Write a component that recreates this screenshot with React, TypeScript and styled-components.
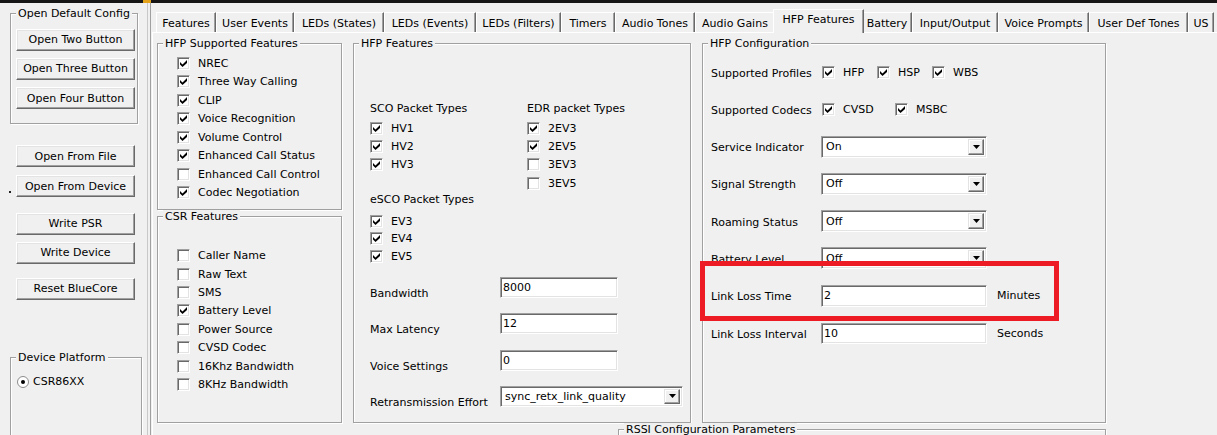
import styled, { createGlobalStyle, css } from "styled-components";

type TabDef = { label: string; width: number; active?: boolean };

const tabs: TabDef[] = [
  { label: "Features", width: 60 },
  { label: "User Events", width: 78 },
  { label: "LEDs (States)", width: 90 },
  { label: "LEDs (Events)", width: 92 },
  { label: "LEDs (Filters)", width: 85 },
  { label: "Timers", width: 54 },
  { label: "Audio Tones", width: 80 },
  { label: "Audio Gains", width: 80 },
  { label: "HFP Features", width: 87, active: true },
  { label: "Battery", width: 50 },
  { label: "Input/Output", width: 86 },
  { label: "Voice Prompts", width: 91 },
  { label: "User Def Tones", width: 99 },
  { label: "US", width: 26 },
];

const hfpSupported: [string, boolean][] = [
  ["NREC", true],
  ["Three Way Calling", true],
  ["CLIP", true],
  ["Voice Recognition", true],
  ["Volume Control", true],
  ["Enhanced Call Status", true],
  ["Enhanced Call Control", false],
  ["Codec Negotiation", true],
];

const csrFeatures: [string, boolean][] = [
  ["Caller Name", false],
  ["Raw Text", false],
  ["SMS", false],
  ["Battery Level", true],
  ["Power Source", false],
  ["CVSD Codec", false],
  ["16Khz Bandwidth", false],
  ["8KHz Bandwidth", false],
];

const GlobalStyle = createGlobalStyle`
  html, body {
    margin: 0;
    padding: 0;
    background: #f0f0f0;
  }
  body {
    font-family: "DejaVu Sans", "Liberation Sans", sans-serif;
    font-size: 11px;
    line-height: 13px;
    color: #000;
  }
  * {
    box-sizing: border-box;
  }
`;

const Window = styled.div`
  width: 1217px;
  height: 435px;
  overflow: hidden;
  display: flex;
  flex-direction: column;
  background: #f0f0f0;
`;

const TopStrip = styled.div`
  height: 3px;
  flex: none;
  display: flex;
  background: #161616;
`;

const StripMark = styled.span`
  margin-left: 143px;
  width: 8px;
  background: #e3a21a;
`;

const Body = styled.div`
  flex: 1;
  display: flex;
  min-height: 0;
`;

const Sidebar = styled.div`
  width: 147px;
  flex: none;
  display: flex;
  flex-direction: column;
  padding-left: 10px;
  overflow: hidden;
`;

const Splitter = styled.div`
  width: 4px;
  flex: none;
  border-left: 1px solid #c8c8c8;
  border-right: 1px solid #a0a0a0;
`;

const Group = styled.fieldset`
  margin: 0;
  padding: 0;
  min-width: 0;
  border: 1px solid #a0a0a0;
  box-shadow: inset 1px 1px 0 #fff, 1px 1px 0 #fff;
`;

const Legend = styled.legend`
  margin-left: 5px;
  padding: 0 2px;
  line-height: 13px;
  background: #f0f0f0;
  white-space: nowrap;
`;

const GroupBody = styled.div<{ $pad: string }>`
  padding: ${(p) => p.$pad};
  display: flex;
  flex-direction: column;
`;

const DefaultConfigGroup = styled(Group)`
  width: 128px;
  height: 117.5px;
  margin-top: 3.5px;
  flex: none;
`;

const PlatformGroup = styled(Group)`
  width: 132px;
  height: 110px;
  margin-top: 51.5px;
  flex: none;
`;

const Button = styled.button<{ $mt?: number; $ml?: number; $mark?: boolean }>`
  position: relative;
  display: block;
  flex: none;
  width: 119px;
  height: 22px;
  margin: ${(p) => p.$mt ?? 0}px 0 0 ${(p) => p.$ml ?? 6}px;
  padding: 0;
  font: inherit;
  color: #000;
  background: #f0f0f0;
  border: 1px solid;
  border-color: #fff #696969 #696969 #fff;
  box-shadow: inset -1px -1px 0 #a0a0a0, inset 1px 1px 0 #e3e3e3;
  ${(p) =>
    p.$mark &&
    css`
      &::before {
        content: "";
        position: absolute;
        left: -8px;
        top: 15px;
        width: 2px;
        height: 2px;
        background: #222;
      }
    `}
`;

const RadioRow = styled.div`
  display: flex;
  align-items: center;
  gap: 4px;
  height: 13px;
`;

const TabArea = styled.div`
  flex: 1;
  min-width: 0;
  display: flex;
  flex-direction: column;
  overflow: hidden;
`;

const TabStrip = styled.div`
  height: 29px;
  flex: none;
  display: flex;
  align-items: flex-end;
  padding-left: 5px;
`;

const Tab = styled.div<{ $w: number; $active?: boolean }>`
  flex: none;
  width: ${(p) => p.$w}px;
  height: 20px;
  display: flex;
  align-items: center;
  justify-content: center;
  padding-top: 1px;
  white-space: nowrap;
  background: #f0f0f0;
  border-top: 1px solid #fff;
  border-left: 1px solid #fff;
  border-right: 1px solid #696969;
  box-shadow: inset -1px 0 0 #a0a0a0;
  ${(p) =>
    p.$active &&
    css`
      position: relative;
      z-index: 1;
      width: ${p.$w + 4}px;
      height: 24px;
      margin: 0 -2px -1px;
      padding: 0 0 4px;
    `}
`;

const TabPanel = styled.div`
  flex: 1;
  min-height: 0;
  margin-left: 1px;
  border-top: 1px solid #fff;
  border-left: 1px solid #fff;
  padding: 3.5px 0 0 4px;
  display: flex;
  flex-direction: column;
`;

const Columns = styled.div`
  height: 386px;
  flex: none;
  display: flex;
  gap: 11px;
`;

const Column = styled.div<{ $w: number }>`
  width: ${(p) => p.$w}px;
  flex: none;
  display: flex;
  flex-direction: column;
`;

const FixedGroup = styled(Group)<{ $h: number }>`
  height: ${(p) => p.$h}px;
  flex: none;
`;

const FillGroup = styled(Group)`
  flex: 1;
`;

const RssiGroup = styled(Group)`
  width: 488px;
  height: 60px;
  margin-left: 461px;
  flex: none;
`;

const CheckRow = styled.div<{ $h?: number; $w?: number }>`
  display: flex;
  align-items: center;
  gap: 8px;
  height: ${(p) => p.$h ?? 18.5}px;
  white-space: nowrap;
  ${(p) =>
    p.$w &&
    css`
      width: ${p.$w}px;
      flex: none;
    `}
`;

const CheckFrame = styled.span`
  flex: none;
  width: 13px;
  height: 13px;
  display: flex;
  align-items: center;
  justify-content: center;
  background: #fff;
  border: 1px solid;
  border-color: #a0a0a0 #fff #fff #a0a0a0;
  box-shadow: inset 1px 1px 0 #696969, inset -1px -1px 0 #e3e3e3;
`;

const PacketGrid = styled.div`
  display: grid;
  grid-template-columns: 157px auto;
`;

const PacketColumn = styled.div`
  display: flex;
  flex-direction: column;
`;

const Caption = styled.div<{ $mt?: number; $mb?: number }>`
  height: 13px;
  line-height: 13px;
  white-space: nowrap;
  margin-top: ${(p) => p.$mt ?? 0}px;
  margin-bottom: ${(p) => p.$mb ?? 0}px;
`;

const FormList = styled.div`
  display: flex;
  flex-direction: column;
  gap: 15.3px;
  margin-top: 11.7px;
`;

const FormRow = styled.div`
  display: flex;
  height: 21px;
`;

const FormLabel = styled.span`
  width: 130px;
  flex: none;
  padding-top: 10px;
  white-space: nowrap;
`;

const sunken = css`
  background: #fff;
  border: 1px solid;
  border-color: #a0a0a0 #fff #fff #a0a0a0;
  box-shadow: inset 1px 1px 0 #696969, inset -1px -1px 0 #e3e3e3;
`;

const Field = styled.input<{ $w: number; $h: number }>`
  ${sunken};
  width: ${(p) => p.$w}px;
  height: ${(p) => p.$h}px;
  flex: none;
  margin: 0;
  padding: 0 2px;
  font: inherit;
  color: #000;
  outline: none;
`;

const SelectBox = styled.div<{ $w: number; $h: number }>`
  ${sunken};
  width: ${(p) => p.$w}px;
  height: ${(p) => p.$h}px;
  flex: none;
  display: flex;
  align-items: center;
  padding: 2px 2px 2px 4px;
`;

const SelectValue = styled.span`
  flex: 1;
  white-space: nowrap;
  overflow: hidden;
`;

const DropButton = styled.span`
  width: 16px;
  height: 100%;
  flex: none;
  display: flex;
  align-items: center;
  justify-content: center;
  background: #f0f0f0;
  border: 1px solid;
  border-color: #e3e3e3 #696969 #696969 #e3e3e3;
  box-shadow: inset -1px -1px 0 #a0a0a0, inset 1px 1px 0 #fff;
`;

const ConfigList = styled.div`
  display: flex;
  flex-direction: column;
  gap: 15.3px;
`;

const ConfigRow = styled.div`
  position: relative;
  display: flex;
  align-items: center;
  height: 22px;
`;

const ConfigLabel = styled.span`
  width: 110px;
  flex: none;
  padding-top: 2px;
  white-space: nowrap;
`;

const CheckGroup = styled.div`
  display: flex;
  align-items: center;
  margin-left: 1px;
`;

const Unit = styled.span`
  margin-left: 10px;
  white-space: nowrap;
`;

const Highlight = styled.div`
  position: absolute;
  left: -11px;
  top: -24px;
  width: 359px;
  height: 60px;
  border: 5px solid #ed1c24;
  z-index: 2;
  pointer-events: none;
`;

function Check({ on }: { on?: boolean }) {
  return (
    <CheckFrame>
      {on && (
        <svg width="7" height="7" viewBox="0 0 7 7">
          <polygon points="0,2 2.5,4.5 7,0 7,3 2.5,7 0,4.5" fill="#000" />
        </svg>
      )}
    </CheckFrame>
  );
}

function CheckItem({ label, on, h, w }: { label: string; on?: boolean; h?: number; w?: number }) {
  return (
    <CheckRow $h={h} $w={w}>
      <Check on={on} />
      <span>{label}</span>
    </CheckRow>
  );
}

function Dropdown({ value, w, h }: { value: string; w: number; h: number }) {
  return (
    <SelectBox $w={w} $h={h}>
      <SelectValue>{value}</SelectValue>
      <DropButton>
        <svg width="7" height="4" viewBox="0 0 7 4">
          <polygon points="0,0 7,0 3.5,4" fill="#000" />
        </svg>
      </DropButton>
    </SelectBox>
  );
}

function Radio() {
  return (
    <svg width="12" height="12" viewBox="0 0 12 12">
      <circle cx="6" cy="6" r="5.5" fill="#fff" stroke="#8c8c8c" />
      <circle cx="6" cy="6" r="2" fill="#000" />
    </svg>
  );
}

function Sidebar_() {
  return (
    <Sidebar>
      <DefaultConfigGroup>
        <Legend>Open Default Config</Legend>
        <GroupBody $pad="9px 0 0 0">
          <Button $ml={5}>Open Two Button</Button>
          <Button $ml={5} $mt={7.3}>Open Three Button</Button>
          <Button $ml={5} $mt={7.3}>Open Four Button</Button>
        </GroupBody>
      </DefaultConfigGroup>
      <Button $mt={21}>Open From File</Button>
      <Button $mt={8} $mark>Open From Device</Button>
      <Button $mt={15.7}>Write PSR</Button>
      <Button $mt={7}>Write Device</Button>
      <Button $mt={14.3}>Reset BlueCore</Button>
      <PlatformGroup>
        <Legend>Device Platform</Legend>
        <GroupBody $pad="10.7px 0 0 6px">
          <RadioRow>
            <Radio />
            <span>CSR86XX</span>
          </RadioRow>
        </GroupBody>
      </PlatformGroup>
    </Sidebar>
  );
}

export default function App() {
  return (
    <>
      <GlobalStyle />
      <Window>
        <TopStrip>
          <StripMark />
        </TopStrip>
        <Body>
          <Sidebar_ />
          <Splitter />
          <TabArea>
            <TabStrip>
              {tabs.map((t) => (
                <Tab key={t.label} $w={t.width} $active={t.active}>
                  {t.label}
                </Tab>
              ))}
            </TabStrip>
            <TabPanel>
              <Columns>
                <Column $w={185}>
                  <FixedGroup $h={173.5}>
                    <Legend>HFP Supported Features</Legend>
                    <GroupBody $pad="4.25px 0 0 19px">
                      {hfpSupported.map(([label, on]) => (
                        <CheckItem key={label} label={label} on={on} />
                      ))}
                    </GroupBody>
                  </FixedGroup>
                  <FillGroup>
                    <Legend>CSR Features</Legend>
                    <GroupBody $pad="23.5px 0 0 19px">
                      {csrFeatures.map(([label, on]) => (
                        <CheckItem key={label} label={label} on={on} h={18.4} />
                      ))}
                    </GroupBody>
                  </FillGroup>
                </Column>

                <Column $w={338}>
                  <FillGroup>
                    <Legend>HFP Features</Legend>
                    <GroupBody $pad="52px 0 0 16px">
                      <PacketGrid>
                        <PacketColumn>
                          <Caption $mb={4.5}>SCO Packet Types</Caption>
                          <CheckItem label="HV1" on h={18.3} />
                          <CheckItem label="HV2" on h={18.3} />
                          <CheckItem label="HV3" on h={18.3} />
                          <Caption $mt={19.6} $mb={6}>eSCO Packet Types</Caption>
                          <CheckItem label="EV3" on h={17.6} />
                          <CheckItem label="EV4" on h={17.6} />
                          <CheckItem label="EV5" on h={17.6} />
                        </PacketColumn>
                        <PacketColumn>
                          <Caption $mb={4.5}>EDR packet Types</Caption>
                          <CheckItem label="2EV3" on h={18.3} />
                          <CheckItem label="2EV5" on h={18.3} />
                          <CheckItem label="3EV3" h={18.3} />
                          <CheckItem label="3EV5" h={18.3} />
                        </PacketColumn>
                      </PacketGrid>
                      <FormList>
                        <FormRow>
                          <FormLabel>Bandwidth</FormLabel>
                          <Field $w={118} $h={21} defaultValue="8000" readOnly />
                        </FormRow>
                        <FormRow>
                          <FormLabel>Max Latency</FormLabel>
                          <Field $w={118} $h={21} defaultValue="12" readOnly />
                        </FormRow>
                        <FormRow>
                          <FormLabel>Voice Settings</FormLabel>
                          <Field $w={118} $h={21} defaultValue="0" readOnly />
                        </FormRow>
                        <FormRow>
                          <FormLabel>Retransmission Effort</FormLabel>
                          <Dropdown value="sync_retx_link_quality" w={183} h={21} />
                        </FormRow>
                      </FormList>
                    </GroupBody>
                  </FillGroup>
                </Column>

                <Column $w={404}>
                  <FillGroup>
                    <Legend>HFP Configuration</Legend>
                    <GroupBody $pad="11.5px 0 0 8px">
                      <ConfigList>
                        <ConfigRow>
                          <ConfigLabel>Supported Profiles</ConfigLabel>
                          <CheckGroup>
                            <CheckItem label="HFP" on w={55} />
                            <CheckItem label="HSP" on w={55} />
                            <CheckItem label="WBS" on />
                          </CheckGroup>
                        </ConfigRow>
                        <ConfigRow>
                          <ConfigLabel>Supported Codecs</ConfigLabel>
                          <CheckGroup>
                            <CheckItem label="CVSD" on w={73} />
                            <CheckItem label="MSBC" on />
                          </CheckGroup>
                        </ConfigRow>
                        <ConfigRow>
                          <ConfigLabel>Service Indicator</ConfigLabel>
                          <Dropdown value="On" w={166} h={22} />
                        </ConfigRow>
                        <ConfigRow>
                          <ConfigLabel>Signal Strength</ConfigLabel>
                          <Dropdown value="Off" w={166} h={22} />
                        </ConfigRow>
                        <ConfigRow>
                          <ConfigLabel>Roaming Status</ConfigLabel>
                          <Dropdown value="Off" w={166} h={22} />
                        </ConfigRow>
                        <ConfigRow>
                          <ConfigLabel>Battery Level</ConfigLabel>
                          <Dropdown value="Off" w={166} h={22} />
                        </ConfigRow>
                        <ConfigRow>
                          <Highlight />
                          <ConfigLabel>Link Loss Time</ConfigLabel>
                          <Field $w={166} $h={22} defaultValue="2" readOnly />
                          <Unit>Minutes</Unit>
                        </ConfigRow>
                        <ConfigRow>
                          <ConfigLabel>Link Loss Interval</ConfigLabel>
                          <Field $w={166} $h={21} defaultValue="10" readOnly />
                          <Unit>Seconds</Unit>
                        </ConfigRow>
                      </ConfigList>
                    </GroupBody>
                  </FillGroup>
                </Column>
              </Columns>
              <RssiGroup>
                <Legend>RSSI Configuration Parameters</Legend>
              </RssiGroup>
            </TabPanel>
          </TabArea>
        </Body>
      </Window>
    </>
  );
}
